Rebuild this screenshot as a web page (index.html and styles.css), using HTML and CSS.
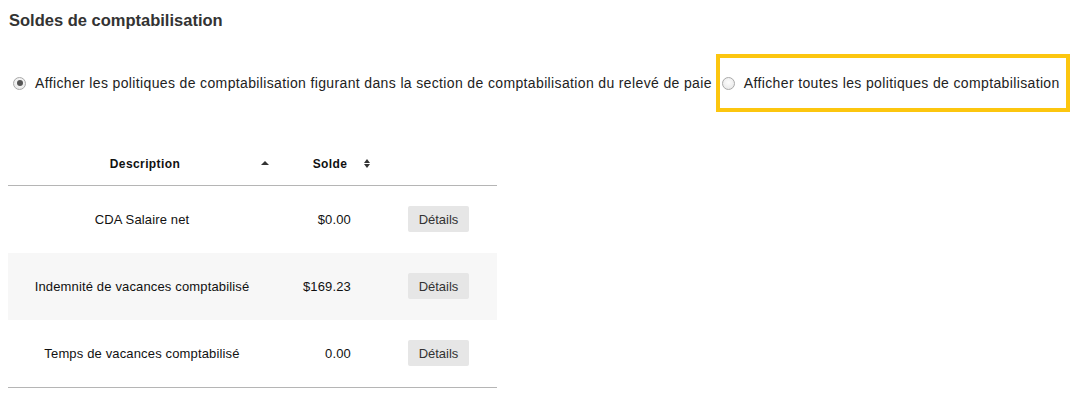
FILE: index.html
```html
<!DOCTYPE html>
<html lang="fr">
<head>
<meta charset="utf-8">
<title>Soldes de comptabilisation</title>
<link rel="stylesheet" href="styles.css">
</head>
<body>
<h2 class="title">Soldes de comptabilisation</h2>
<div class="options">
  <label class="option">
    <input type="radio" name="policy" class="radio" checked>
    <span>Afficher les politiques de comptabilisation figurant dans la section de comptabilisation du relevé de paie</span>
  </label>
  <label class="option option-highlight">
    <input type="radio" name="policy" class="radio">
    <span>Afficher toutes les politiques de comptabilisation</span>
  </label>
</div>
<table class="balances">
  <thead>
    <tr>
      <th class="col-desc">Description<span class="sort sort-asc"></span></th>
      <th class="col-bal">Solde<span class="sort sort-both"></span></th>
      <th class="col-act"></th>
    </tr>
  </thead>
  <tbody>
    <tr>
      <td class="col-desc">CDA Salaire net</td>
      <td class="col-bal">$0.00</td>
      <td class="col-act"><button class="btn">Détails</button></td>
    </tr>
    <tr class="alt">
      <td class="col-desc">Indemnité de vacances comptabilisé</td>
      <td class="col-bal">$169.23</td>
      <td class="col-act"><button class="btn">Détails</button></td>
    </tr>
    <tr>
      <td class="col-desc">Temps de vacances comptabilisé</td>
      <td class="col-bal">0.00</td>
      <td class="col-act"><button class="btn">Détails</button></td>
    </tr>
  </tbody>
</table>
</body>
</html>
```
FILE: styles.css
```css
html, body {
  margin: 0;
  background: #fff;
}
body {
  padding: 0 8px;
  font-family: "Liberation Sans", Arial, sans-serif;
  color: #222;
}
.title {
  margin: 10px 0 0 1px;
  font-size: 16.5px;
  line-height: 20px;
  font-weight: bold;
  color: #333;
}
.options {
  display: flex;
  align-items: center;
  margin-top: 24px;
  font-size: 14px;
  letter-spacing: 0.36px;
  color: #222;
}
.option {
  display: flex;
  align-items: center;
  white-space: nowrap;
}
.option-highlight {
  margin-left: 4px;
  border: 4px solid #fcc60f;
  height: 50px;
  padding: 0 6px 0 0;
}
.radio {
  appearance: none;
  -webkit-appearance: none;
  width: 13px;
  height: 13px;
  margin: 0 9px 0 5px;
  border-radius: 50%;
  border: 1px solid #a9a9a9;
  background: radial-gradient(circle at 50% 40%, #fdfdfd 0%, #e4e4e4 100%);
  box-sizing: border-box;
  position: relative;
}
.option-highlight .radio {
  margin-left: 2px;
}
.radio:checked::after {
  content: "";
  position: absolute;
  left: 2.5px;
  top: 2.5px;
  width: 6px;
  height: 6px;
  border-radius: 50%;
  background: #555;
}
.balances {
  margin-top: 32px;
  border-collapse: collapse;
  table-layout: fixed;
  width: 489px;
}
.balances th {
  position: relative;
  height: 41px;
  font-size: 12px;
  font-weight: bold;
  letter-spacing: 0.4px;
  color: #111;
  text-align: center;
  border-bottom: 1px solid #b5b5b5;
  padding: 0;
  box-sizing: border-box;
}
.balances th.col-desc { width: 268px; padding-left: 6px; }
.balances th.col-bal { width: 102px; padding-left: 6px; }
.balances th.col-act { width: 119px; }
.sort {
  position: absolute;
  right: 7px;
  top: 50%;
  width: 0;
  height: 0;
}
.sort-asc {
  margin-top: -3px;
  border-left: 4px solid transparent;
  border-right: 4px solid transparent;
  border-bottom: 4px solid #333;
}
.sort-both {
  right: 8px;
  margin-top: -5px;
  border-left: 3.5px solid transparent;
  border-right: 3.5px solid transparent;
  border-bottom: 4px solid #333;
}
.sort-both::after {
  content: "";
  position: absolute;
  left: -3.5px;
  top: 5px;
  border-left: 3.5px solid transparent;
  border-right: 3.5px solid transparent;
  border-top: 4px solid #333;
}
.balances td {
  height: 67px;
  padding: 0;
  font-size: 13px;
  letter-spacing: 0.15px;
  color: #111;
  vertical-align: middle;
}
.balances tbody tr:last-child td {
  border-bottom: 1px solid #b5b5b5;
}
.balances tr.alt td {
  background: #f7f7f7;
}
.balances td.col-desc { text-align: center; }
.balances td.col-bal { text-align: right; padding-right: 27px; }
.balances td.col-act { text-align: center; }
.btn {
  font-family: "Liberation Sans", Arial, sans-serif;
  font-size: 13px;
  color: #333;
  background: #e6e6e6;
  border: none;
  border-radius: 2px;
  height: 26px;
  padding: 0 11px;
  margin-left: 2px;
}
```
